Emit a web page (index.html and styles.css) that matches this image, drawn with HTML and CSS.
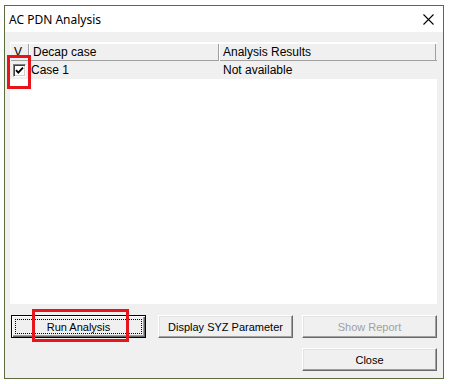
FILE: index.html
```html
<!DOCTYPE html>
<html>
<head>
<meta charset="utf-8">
<link rel="stylesheet" href="styles.css">
</head>
<body>
<div class="window">
  <div class="titlebar">
    <span class="title">AC PDN Analysis</span>
    <svg class="close-x" width="11" height="11" viewBox="0 0 11 11"><path d="M0.5 0.5 L10.5 10.5 M10.5 0.5 L0.5 10.5" stroke="#000" stroke-width="1.1" fill="none"/></svg>
  </div>
  <div class="client">
    <div class="list">
      <div class="header">
        <div class="hcell c-v">V</div>
        <div class="hcell c-case">Decap case</div>
        <div class="hcell c-res">Analysis Results</div>
      </div>
      <div class="row selected">
        <div class="cell c-v"><span class="check"><svg width="9" height="9" viewBox="0 0 9 9"><path d="M1 4.2 L3.3 6.6 L8 1.6" stroke="#000" stroke-width="1.9" fill="none"/></svg></span></div>
        <div class="cell c-case">Case 1</div>
        <div class="cell c-res">Not available</div>
      </div>
    </div>
    <div class="btnrow">
      <button class="btn default w1"><span class="focus">Run Analysis</span></button>
      <button class="btn w2">Display SYZ Parameter</button>
      <button class="btn w3 disabled">Show Report</button>
    </div>
    <div class="btnrow2">
      <button class="btn w3">Close</button>
    </div>
  </div>
</div>
<div class="redbox rb-check"></div>
<div class="redbox rb-run"></div>
</body>
</html>
```
FILE: styles.css
```css
html, body { margin: 0; padding: 0; background: #fff; }
body { position: relative; width: 450px; height: 384px; overflow: hidden; font-family: "Liberation Sans", Arial, sans-serif; font-size: 12px; color: #000; }
.window { margin: 5px 0 0 4px; width: 440px; height: 374px; box-sizing: border-box; border: 1px solid #5a6b3c; display: flex; flex-direction: column; }
.titlebar { height: 26px; background: #fff; display: flex; align-items: center; padding: 0 9px 0 4px; justify-content: space-between; }
.title { font-family: "Noto Sans", "Open Sans", sans-serif; font-size: 12px; color: #000; }
.client { flex: 1; background: #f0f0f0; padding: 10px 0 0 5px; display: flex; flex-direction: column; }
.list { width: 427px; height: 262px; background: #fff; box-sizing: border-box; padding-top: 1px; }
.header { display: flex; height: 18px; box-sizing: border-box; background: #f0f0f0; border-top: 1px solid #fff; border-bottom: 1px solid #a0a0a0; }
.hcell { box-sizing: border-box; height: 17px; line-height: 16px; padding-left: 3px; border-right: 1px solid #a0a0a0; border-left: 1px solid #fff; white-space: nowrap; }
.c-v { width: 19px; }
.c-case { width: 190px; }
.c-res { width: 217px; }
.row { display: flex; height: 18px; align-items: center; }
.row.selected { background: #f0f0f0; }
.cell { box-sizing: border-box; padding-left: 4px; white-space: nowrap; line-height: 18px; }
.row .c-v { padding-left: 3px; display: flex; align-items: center; }
.row .c-case { padding-left: 2px; }
.check { width: 13px; height: 13px; box-sizing: border-box; background: #fff; border-top: 1px solid #808080; border-left: 1px solid #808080; border-right: 1px solid #fff; border-bottom: 1px solid #fff; box-shadow: inset 1px 1px 0 #404040, inset -1px -1px 0 #d4d0c8; display: flex; align-items: center; justify-content: center; }
.btnrow { display: flex; margin-top: 11px; margin-left: 1px; }
.btnrow2 { display: flex; justify-content: flex-end; margin-top: 10px; width: 427px; }
.btn { height: 23px; box-sizing: border-box; background: #f0f0f0; font-family: "Liberation Sans", Arial, sans-serif; font-size: 11px; color: #000; border: 1px solid; border-color: #fff #696969 #696969 #fff; box-shadow: inset -1px -1px 0 #a0a0a0, inset 1px 1px 0 #e3e3e3; padding: 0; display: flex; align-items: center; justify-content: center; }
.w1 { width: 135px; }
.w2 { width: 135px; margin-left: 12px; }
.btnrow .w3 { width: 135px; margin-left: 9px; }
.btnrow2 .w3 { width: 135px; }
.btn.default { border: 1px solid #000; box-shadow: inset 1px 1px 0 #fff, inset -1px -1px 0 #696969, inset -2px -2px 0 #a0a0a0; padding: 3px; }
.focus { flex: 1; align-self: stretch; border: 1px dotted #000; display: flex; align-items: center; justify-content: center; }
.btn.disabled { color: #a0a0a0; }
.redbox { position: absolute; border: 3px solid #e8141c; box-sizing: border-box; }
.rb-check { left: 7px; top: 55px; width: 24px; height: 34px; }
.rb-run { left: 32px; top: 309px; width: 97px; height: 33px; }
```
